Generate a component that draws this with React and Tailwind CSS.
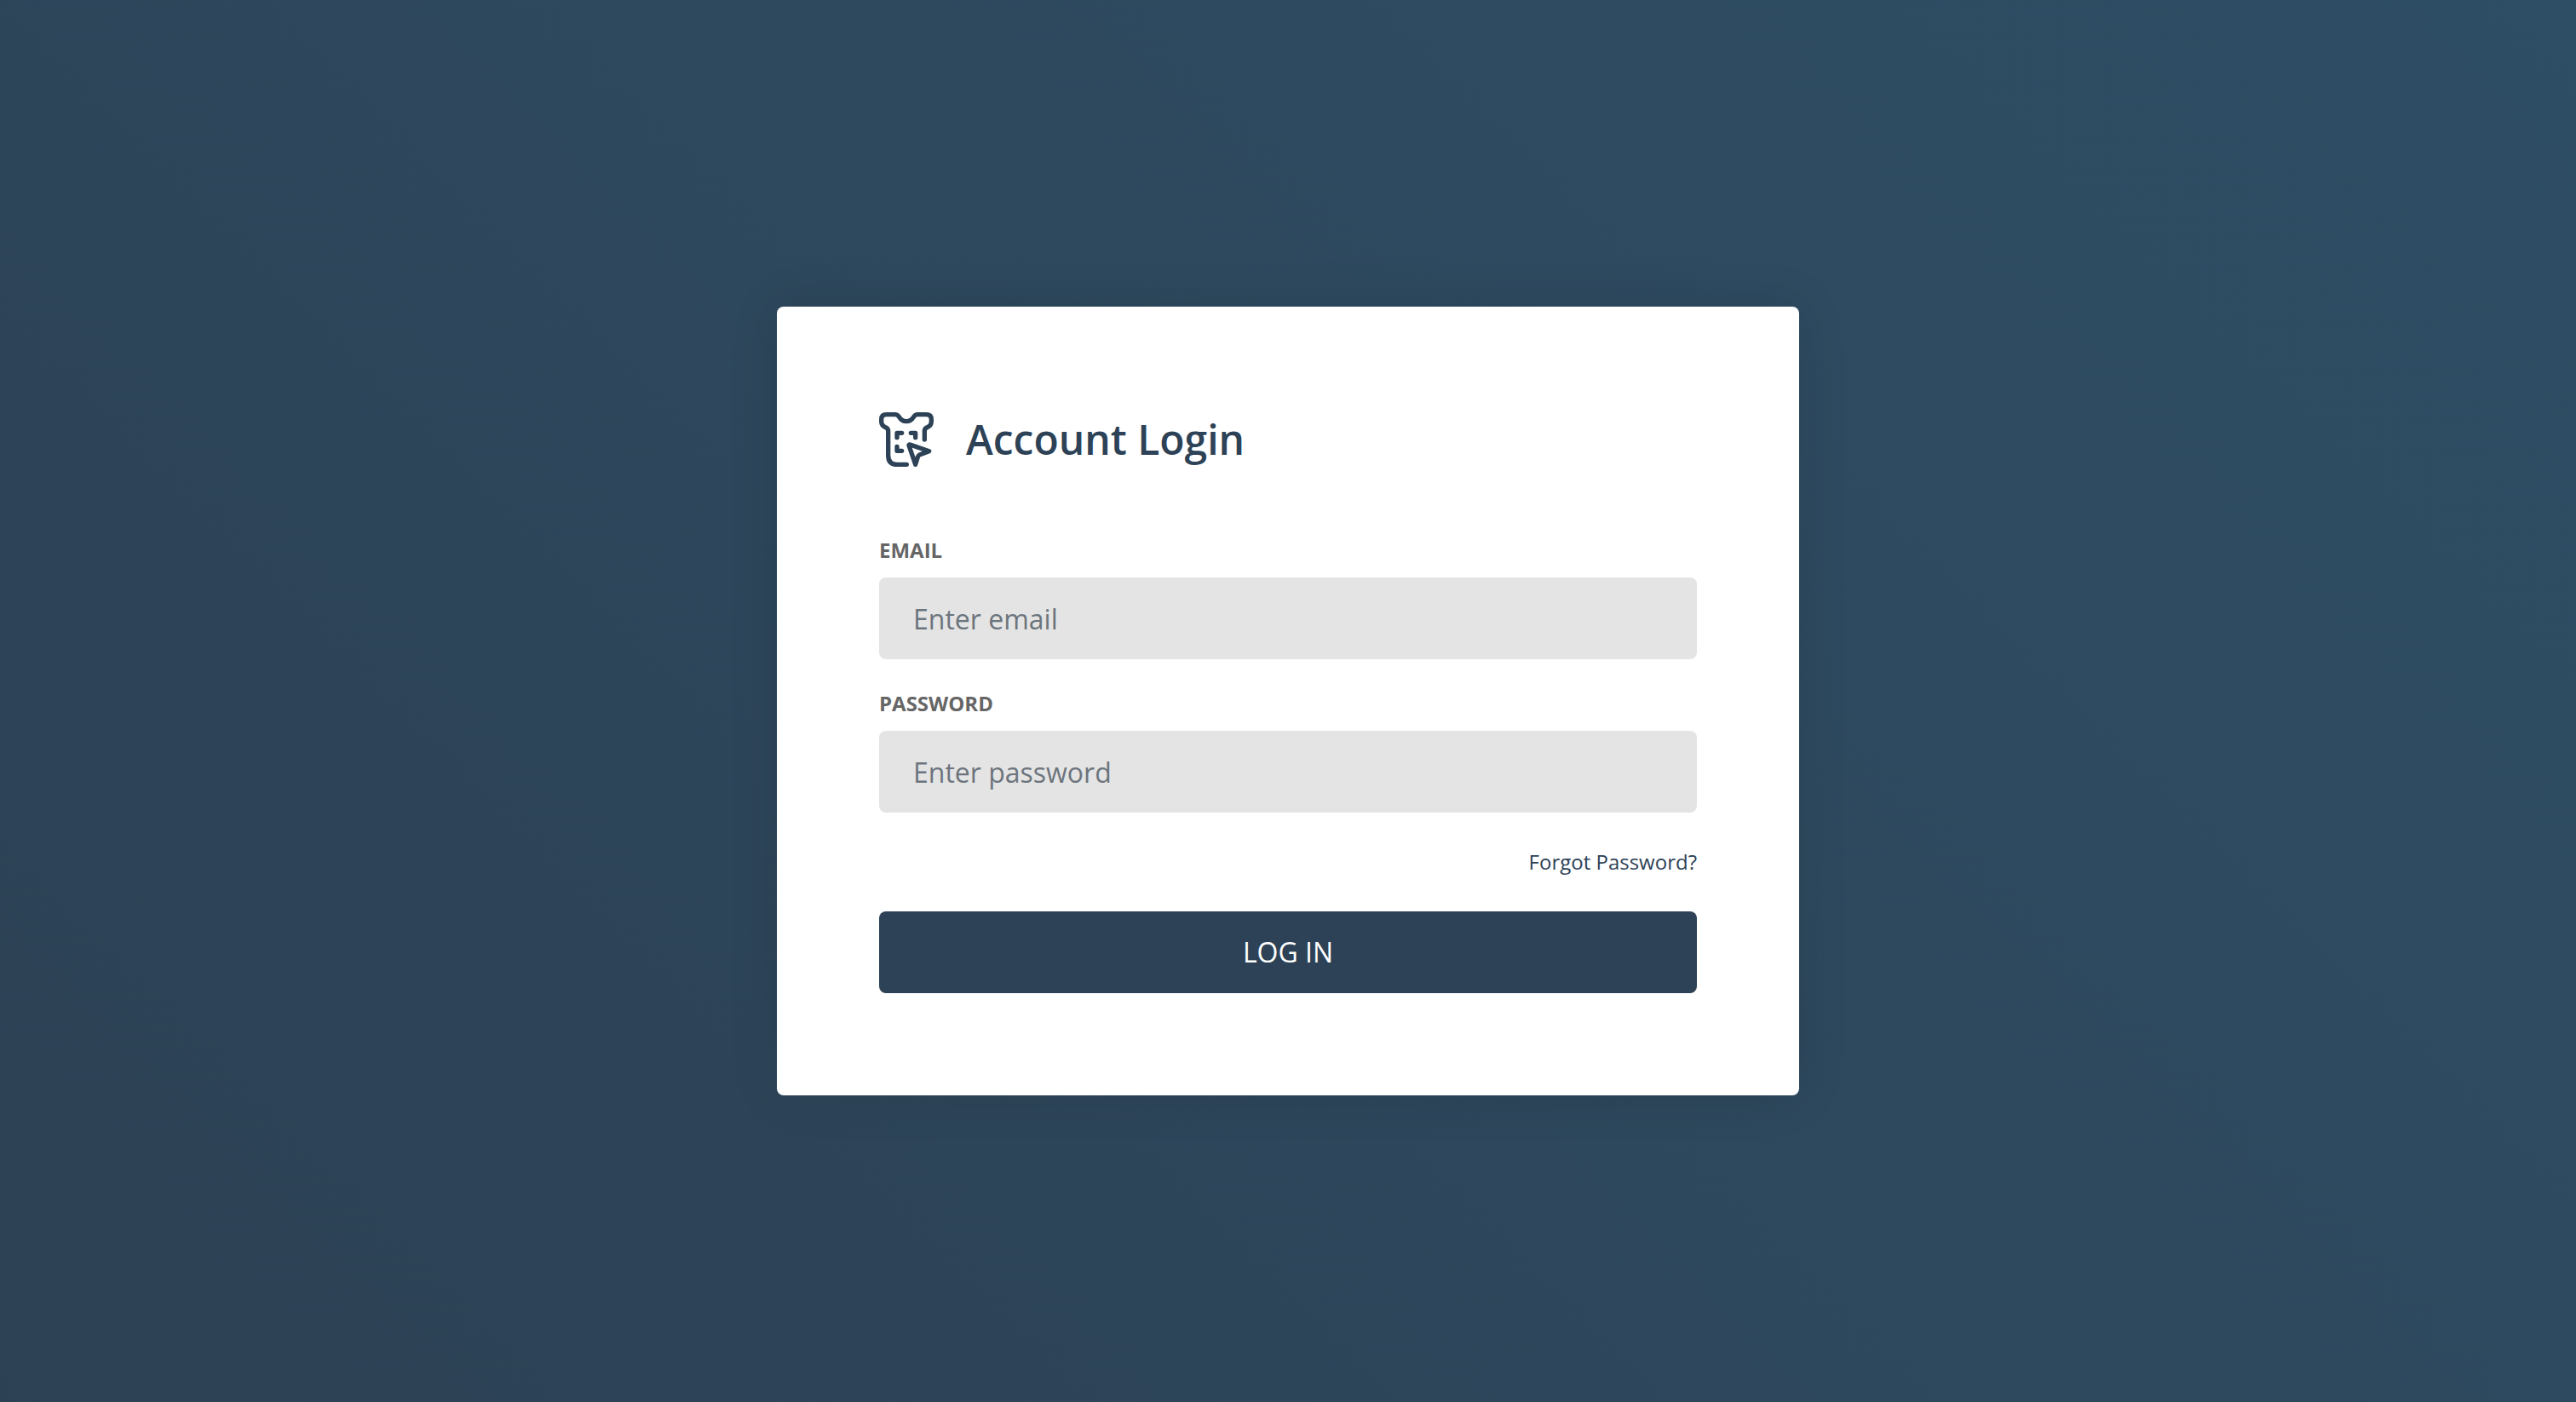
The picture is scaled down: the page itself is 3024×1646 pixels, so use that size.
function ShirtIcon() {
  return (
    <svg
      viewBox="66 59 192 192"
      className="size-16 shrink-0"
      fill="none"
      stroke="currentColor"
      strokeWidth="16"
      strokeLinecap="round"
      strokeLinejoin="round"
      aria-hidden="true"
    >
      <path d="M163 243H130Q98 243 98 211V124Q97 115 89 112Q74 106 74 92V84Q74 67 92 67H122Q131 67 136 75Q146 91 162 91Q178 91 188 75Q193 67 202 67H232Q250 67 250 84V92Q250 106 235 112Q227 115 226 124V155" />
      <path d="M129 148V132H146M178 132H194V148M129 180V195H146" />
      <path d="M171 176Q170 172 175 173L242 196L210 208Q204 211 202 217L194 243Z" />
    </svg>
  );
}

function Field({ id, label, type, placeholder }) {
  return (
    <div className="flex flex-col gap-3.5">
      <label htmlFor={id} className="text-[24px] leading-9 font-bold text-[#666666] uppercase">
        {label}
      </label>
      <input
        id={id}
        type={type}
        placeholder={placeholder}
        className="h-24 w-full rounded-lg bg-[#e4e4e4] px-10 text-[32px] text-[#495057] outline-none placeholder:text-[#6c757d]"
      />
    </div>
  );
}

export default function App() {
  return (
    <main className="flex min-h-screen items-center justify-center bg-[linear-gradient(45deg,#2d4154,#2e4e65)] font-['Open_Sans',sans-serif]">
      <form
        onSubmit={(e) => e.preventDefault()}
        className="w-full max-w-[1200px] rounded-lg bg-white p-[120px] shadow-[0_0_60px_rgba(0,0,0,0.1)]"
      >
        <header className="flex h-[72px] items-center gap-[38px] text-[#2d4256]">
          <ShirtIcon />
          <h1 className="text-[48px] leading-[72px] font-semibold">Account Login</h1>
        </header>
        <div className="mt-[76px] flex flex-col gap-[34px]">
          <Field id="email" label="Email" type="email" placeholder="Enter email" />
          <Field id="password" label="Password" type="password" placeholder="Enter password" />
        </div>
        <div className="my-10 flex justify-end">
          <a href="#forgot" className="text-[24px] leading-9 text-[#2d4256]">
            Forgot Password?
          </a>
        </div>
        <button type="submit" className="h-24 w-full rounded-lg bg-[#2d4256] text-[32px] text-white">
          LOG IN
        </button>
      </form>
    </main>
  );
}
